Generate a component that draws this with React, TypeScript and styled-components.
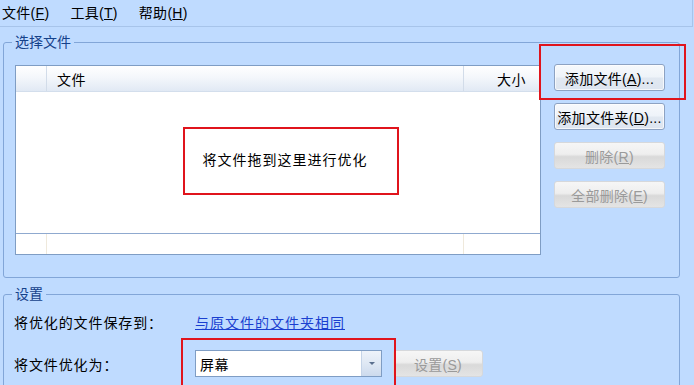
import React from 'react'
import styled, { createGlobalStyle } from 'styled-components'

const GlobalStyle = createGlobalStyle`
  html, body {
    margin: 0;
    padding: 0;
  }
  body {
    background: #bfdbff;
    font-family: "Liberation Sans", "Noto Sans CJK SC", sans-serif;
    font-size: 14px;
    color: #000;
  }
`

const Page = styled.div`
  position: relative;
  width: 694px;
  height: 385px;
  overflow: hidden;
  background: #bfdbff;
`

const MenuBar = styled.div`
  display: flex;
  align-items: center;
  gap: 21px;
  height: 26px;
  width: 690px;
  padding-left: 2px;
  border-bottom: 1px solid #a7c4ea;
  border-right: 1px solid #a7c4ea;
`

const MenuItem = styled.span`
  line-height: 16px;
  white-space: nowrap;
  letter-spacing: 0.3px;
`

const Key = styled.span`
  text-decoration: underline;
`

const Content = styled.div`
  display: flex;
  flex-direction: column;
  padding-left: 3px;
  padding-top: 7px;
  width: 677px;
`

type GroupProps = {
  $top?: number
}

const Group = styled.fieldset<GroupProps>`
  margin: ${({ $top }) => $top || 0}px 0 0;
  padding: 15px 12px 22px 11px;
  border: 1px solid #82a6d8;
  border-radius: 3px;
  min-width: 0;
`

const Legend = styled.legend`
  margin-left: -3px;
  padding: 0 3px;
  line-height: 16px;
  color: #15428b;
`

const FileRow = styled.div`
  display: flex;
  align-items: flex-start;
  gap: 13px;
`

const FileList = styled.div`
  display: flex;
  flex-direction: column;
  width: 524px;
  height: 188px;
  background: #fff;
  border: 1px solid #7f9dc4;
`

const ListHeader = styled.div`
  display: flex;
  height: 25px;
  background: linear-gradient(#ffffff 0%, #f4f7fb 45%, #e1e9f4 100%);
  border-bottom: 1px solid #d3deec;
`

type CellProps = {
  $width?: number
  $right?: boolean
}

const HeadCell = styled.div<CellProps>`
  display: flex;
  align-items: center;
  justify-content: ${({ $right }) => ($right ? 'flex-end' : 'flex-start')};
  flex: ${({ $width }) => ($width ? `0 0 ${$width}px` : '1')};
  padding: ${({ $right }) => ($right ? '0 14px 0 0' : '0 0 0 10px')};
  border-right: 1px solid #d2dce9;
  box-sizing: border-box;
  letter-spacing: 0.5px;

  &:last-child {
    border-right: none;
  }
`

const DropArea = styled.div`
  flex: 1;
  display: flex;
  align-items: center;
  justify-content: center;
  padding-left: 14px;
  padding-bottom: 8px;
  letter-spacing: 1px;
`

const ListFooter = styled.div`
  display: flex;
  height: 20px;
  border-top: 1px solid #8fa9cf;
`

const FootCell = styled.div<CellProps>`
  flex: ${({ $width }) => ($width ? `0 0 ${$width}px` : '1')};
  border-right: 1px solid #efe9dc;
  box-sizing: border-box;

  &:last-child {
    border-right: none;
  }
`

const ButtonColumn = styled.div`
  display: flex;
  flex-direction: column;
  gap: 12px;
  margin-top: -1px;
`

type ButtonProps = {
  $width?: number
}

const Button = styled.button<ButtonProps>`
  width: ${({ $width }) => $width || 111}px;
  height: 27px;
  padding: 0;
  font-family: inherit;
  font-size: 14px;
  letter-spacing: 0.3px;
  white-space: nowrap;
  color: #000;
  border: 1px solid #8da2c2;
  border-radius: 3px;
  background: linear-gradient(#f7f9fc 0%, #eef3f9 48%, #e1e8f1 52%, #dde5f0 100%);
  box-shadow: inset 0 0 0 1px rgba(255, 255, 255, 0.7);

  &:disabled {
    color: #9a9a9a;
    border-color: #d6d8db;
    background: linear-gradient(#f6f6f6 0%, #eeeeee 45%, #d9d9d9 55%, #e4e4e4 100%);
    box-shadow: none;
  }
`

const SettingsGrid = styled.div`
  display: grid;
  grid-template-columns: 181px auto auto;
  grid-template-rows: 20px 27px;
  row-gap: 18px;
  align-items: center;
  justify-content: start;
  margin-top: -5px;
  margin-left: -1px;
`

const Label = styled.span`
  white-space: nowrap;
  letter-spacing: 0.9px;
`

const TextLink = styled.a`
  grid-column: 2 / 4;
  color: #1a3fd0;
  text-decoration: underline;
  white-space: nowrap;
  letter-spacing: 1px;
  cursor: pointer;
`

const Select = styled.div`
  display: flex;
  width: 185px;
  height: 25px;
  background: #fff;
  border: 1px solid #7f9dc4;
  margin-right: 11px;
`

const SelectValue = styled.span`
  flex: 1;
  display: flex;
  align-items: center;
  padding-left: 4px;
  letter-spacing: 0.5px;
`

const SelectArrow = styled.span`
  display: flex;
  align-items: center;
  justify-content: center;
  width: 19px;
  background: linear-gradient(#eef3fa 0%, #dfe8f4 50%, #ccdaed 100%);
  border-left: 1px solid #c5d4e8;

  &::after {
    content: '';
    border-left: 3px solid transparent;
    border-right: 3px solid transparent;
    border-top: 3px solid #5a6f8e;
  }
`

type MarkProps = {
  $x: number
  $y: number
  $w: number
  $h: number
}

const Mark = styled.div<MarkProps>`
  position: absolute;
  left: ${({ $x }) => $x}px;
  top: ${({ $y }) => $y}px;
  width: ${({ $w }) => $w}px;
  height: ${({ $h }) => $h}px;
  border: 2px solid #e0141c;
  box-sizing: border-box;
  pointer-events: none;
`

const App = () => {
  return (
    <Page>
      <GlobalStyle />
      <MenuBar>
        <MenuItem>
          文件(<Key>F</Key>)
        </MenuItem>
        <MenuItem>
          工具(<Key>T</Key>)
        </MenuItem>
        <MenuItem>
          帮助(<Key>H</Key>)
        </MenuItem>
      </MenuBar>

      <Content>
        <Group>
          <Legend>选择文件</Legend>
          <FileRow>
            <FileList>
              <ListHeader>
                <HeadCell $width={31} />
                <HeadCell>文件</HeadCell>
                <HeadCell $width={76} $right>
                  大小
                </HeadCell>
              </ListHeader>
              <DropArea>将文件拖到这里进行优化</DropArea>
              <ListFooter>
                <FootCell $width={31} />
                <FootCell />
                <FootCell $width={76} />
              </ListFooter>
            </FileList>
            <ButtonColumn>
              <Button>
                添加文件(<Key>A</Key>)...
              </Button>
              <Button>
                添加文件夹(<Key>D</Key>)...
              </Button>
              <Button disabled>
                删除(<Key>R</Key>)
              </Button>
              <Button disabled>
                全部删除(<Key>E</Key>)
              </Button>
            </ButtonColumn>
          </FileRow>
        </Group>

        <Group $top={8}>
          <Legend>设置</Legend>
          <SettingsGrid>
            <Label>将优化的文件保存到：</Label>
            <TextLink>与原文件的文件夹相同</TextLink>
            <Label>将文件优化为：</Label>
            <Select>
              <SelectValue>屏幕</SelectValue>
              <SelectArrow />
            </Select>
            <Button $width={90} disabled>
              设置(<Key>S</Key>)
            </Button>
          </SettingsGrid>
        </Group>
      </Content>

      <Mark $x={539} $y={44} $w={147} $h={56} />
      <Mark $x={183} $y={127} $w={216} $h={68} />
      <Mark $x={181} $y={338} $w={215} $h={60} />
    </Page>
  )
}

export default App
